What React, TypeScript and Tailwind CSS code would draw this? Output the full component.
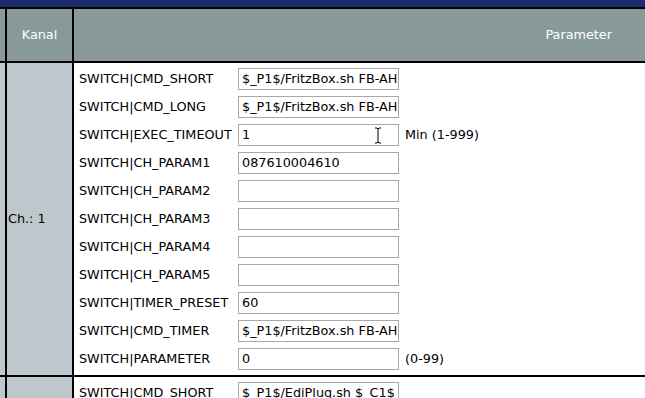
import React from "react";

const rows: { label: string; value: string; suffix?: string; cursor?: boolean }[] = [
  { label: "SWITCH|CMD_SHORT", value: "$_P1$/FritzBox.sh FB-AH" },
  { label: "SWITCH|CMD_LONG", value: "$_P1$/FritzBox.sh FB-AH" },
  { label: "SWITCH|EXEC_TIMEOUT", value: "1", suffix: "Min (1-999)", cursor: true },
  { label: "SWITCH|CH_PARAM1", value: "087610004610" },
  { label: "SWITCH|CH_PARAM2", value: "" },
  { label: "SWITCH|CH_PARAM3", value: "" },
  { label: "SWITCH|CH_PARAM4", value: "" },
  { label: "SWITCH|CH_PARAM5", value: "" },
  { label: "SWITCH|TIMER_PRESET", value: "60" },
  { label: "SWITCH|CMD_TIMER", value: "$_P1$/FritzBox.sh FB-AH" },
  { label: "SWITCH|PARAMETER", value: "0", suffix: "(0-99)" },
];

function Row({ label, value, suffix, cursor }: { label: string; value: string; suffix?: string; cursor?: boolean }) {
  return (
    <div className="flex items-center h-[28px]">
      <div className="w-[164px] shrink-0 pl-[5px] whitespace-nowrap">{label}</div>
      <div className="relative w-[161px] h-[22px] shrink-0 border border-[#a9a9a9] bg-white px-[3px] flex items-center overflow-hidden whitespace-nowrap">
        {value}
        {cursor && (
          <svg className="absolute left-[135px] top-[2px]" width="9" height="17" viewBox="0 0 9 17">
            <path d="M1 1h2l1 1 1-1h2M4 2v13M1 16h2l1-1 1 1h2" fill="none" stroke="#000" strokeWidth="1" />
          </svg>
        )}
      </div>
      {suffix && <div className="pl-[6px] whitespace-nowrap">{suffix}</div>}
    </div>
  );
}

export default function App() {
  return (
    <div
      className="w-[645px] h-[398px] overflow-hidden bg-black text-[12.8px] text-black"
      style={{ fontFamily: '"DejaVu Sans", Verdana, sans-serif' }}
    >
      <div className="h-[7px] bg-[#1c2b6c]" />
      <div className="h-[2px] bg-black" />
      {/* header */}
      <div className="flex h-[52px]">
        <div className="w-[5px] bg-[#899999]" />
        <div className="w-[2px] bg-black" />
        <div className="w-[65px] bg-[#899999] text-white flex items-center justify-center">Kanal</div>
        <div className="w-[2px] bg-black" />
        <div className="flex-1 bg-[#899999] text-white flex items-center justify-end pr-[33px]">Parameter</div>
      </div>
      <div className="h-[2px] bg-black" />
      {/* body row 1 */}
      <div className="flex h-[312px]">
        <div className="w-[5px] bg-[#bec8cc]" />
        <div className="w-[2px] bg-black" />
        <div className="w-[65px] bg-[#bec8cc] flex items-center pl-[1px]">Ch.: 1</div>
        <div className="w-[2px] bg-black" />
        <div className="flex-1 bg-white pt-[2px]">
          {rows.map((r) => (
            <Row key={r.label} {...r} />
          ))}
        </div>
      </div>
      <div className="h-[2px] bg-black" />
      <div className="flex h-[40px]">
        <div className="w-[5px] bg-[#bec8cc]" />
        <div className="w-[2px] bg-black" />
        <div className="w-[65px] bg-[#bec8cc]" />
        <div className="w-[2px] bg-black" />
        <div className="flex-1 bg-white pt-[2px]">
          <Row label="SWITCH|CMD_SHORT" value="$_P1$/EdiPlug.sh $_C1$" />
        </div>
      </div>
    </div>
  );
}
